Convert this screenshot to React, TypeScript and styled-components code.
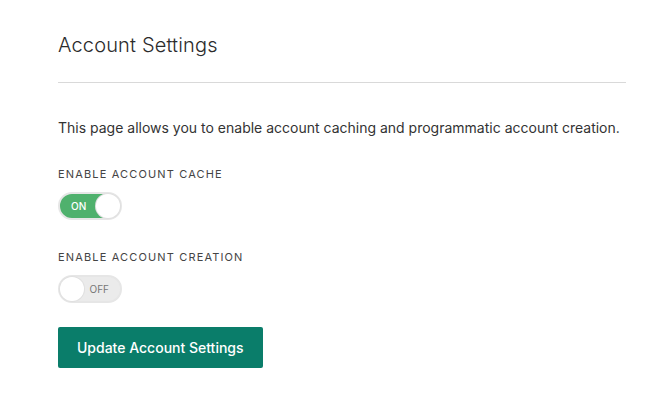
import React, { useState } from 'react';
import styled, { createGlobalStyle } from 'styled-components';

const GlobalStyle = createGlobalStyle`
    body {
        margin: 0;
        background: #ffffff;
        font-family: 'Inter', 'Liberation Sans', sans-serif;
        color: #333333;
    }
`;

const Page = styled.div`
    padding: 32px 27px 0 58px;
`;

const Title = styled.h1`
    margin: 0;
    font-size: 20px;
    font-weight: 300;
    line-height: 26px;
    letter-spacing: 0.15px;
    color: #2b2b2b;
    padding-bottom: 24px;
    border-bottom: 1px solid #d9d9d9;
`;

const Intro = styled.p`
    margin: 35px 0 0;
    font-size: 14px;
    line-height: 20px;
    color: #333333;
`;

const Field = styled.div`
    display: flex;
    flex-direction: column;
    align-items: flex-start;
    margin-top: 28px;
    & + & {
        margin-top: 29px;
    }
`;

const Label = styled.div`
    font-size: 11px;
    line-height: 16px;
    letter-spacing: 1.15px;
    text-transform: uppercase;
    color: #444444;
    margin-bottom: 10px;
`;

const Toggle = styled.button<{ $on: boolean }>`
    position: relative;
    width: 64px;
    height: 28px;
    padding: 0;
    border: 2px solid #e6e6e6;
    border-radius: 14px;
    background: ${(p) => (p.$on ? '#4fb16d' : '#ebebeb')};
    cursor: pointer;
    font-family: 'Inter', 'Liberation Sans', sans-serif;
`;

const ToggleText = styled.span<{ $on: boolean }>`
    position: absolute;
    top: 0;
    bottom: 0;
    display: flex;
    align-items: center;
    font-size: 10px;
    font-weight: ${(p) => (p.$on ? 500 : 400)};
    color: ${(p) => (p.$on ? '#ffffff' : '#777777')};
    ${(p) => (p.$on ? 'left: 11px;' : 'right: 11px;')}
`;

const Knob = styled.span<{ $on: boolean }>`
    position: absolute;
    top: 0;
    ${(p) => (p.$on ? 'right: 0;' : 'left: 0;')}
    width: 24px;
    height: 24px;
    border-radius: 50%;
    background: #ffffff;
    box-shadow: 0 0 0 1px #e0e0e0;
`;

const SubmitButton = styled.button`
    margin-top: 24px;
    height: 41px;
    padding: 0 19px;
    border: 0;
    border-radius: 2px;
    background: #0a7d6a;
    color: #ffffff;
    font-family: 'Inter', 'Liberation Sans', sans-serif;
    font-size: 14px;
    font-weight: 500;
    cursor: pointer;
`;

const Switch = ({ on, onToggle }: { on: boolean; onToggle: () => void }) => (
    <Toggle $on={on} onClick={onToggle} aria-pressed={on}>
        <ToggleText $on={on}>{on ? 'ON' : 'OFF'}</ToggleText>
        <Knob $on={on} />
    </Toggle>
);

const App = () => {
    const [cache, setCache] = useState(true);
    const [creation, setCreation] = useState(false);

    return (
        <Page>
            <GlobalStyle />
            <Title>Account Settings</Title>
            <Intro>This page allows you to enable account caching and programmatic account creation.</Intro>
            <Field>
                <Label>Enable Account Cache</Label>
                <Switch on={cache} onToggle={() => setCache(!cache)} />
            </Field>
            <Field>
                <Label>Enable Account Creation</Label>
                <Switch on={creation} onToggle={() => setCreation(!creation)} />
            </Field>
            <SubmitButton>Update Account Settings</SubmitButton>
        </Page>
    );
};

export default App;
